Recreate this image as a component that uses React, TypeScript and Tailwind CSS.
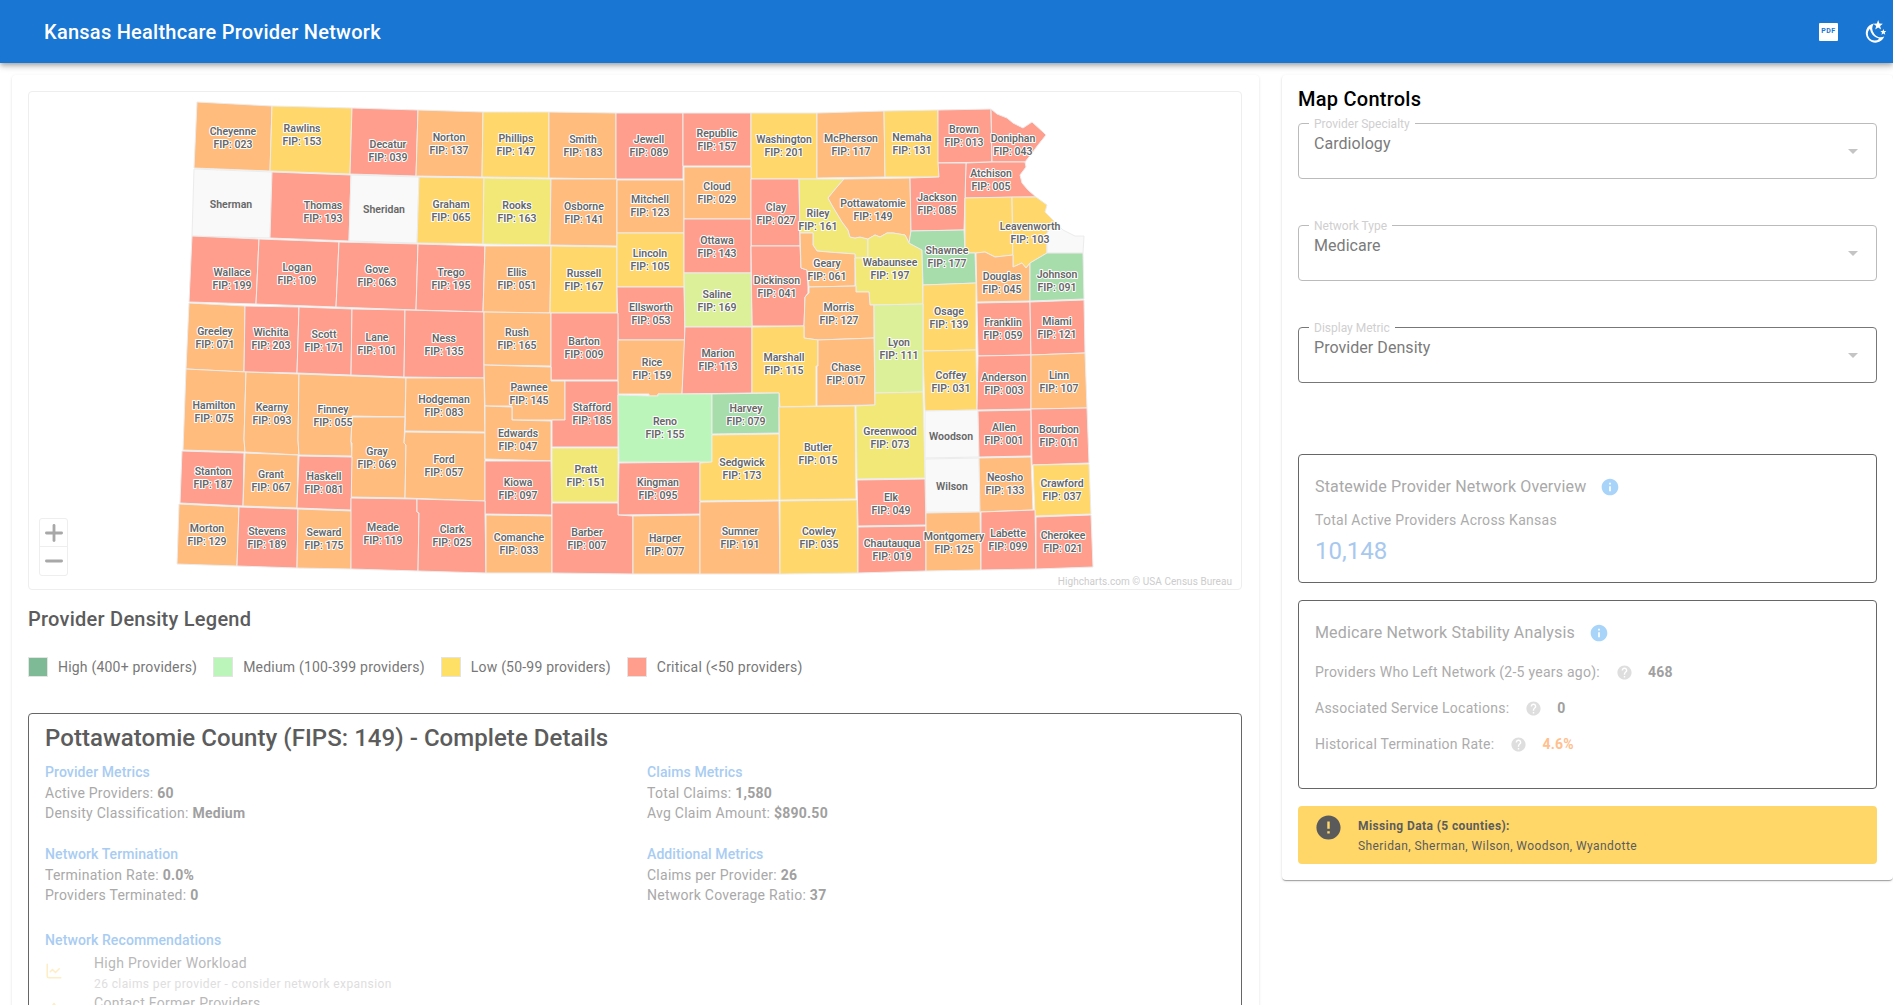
import React from "react";
import { MdInfo, MdHelp, MdError, MdArrowDropDown } from "react-icons/md";
import { Plus, Minus, ChartLine, Star } from "lucide-react";

const O = "#ffbc7d", Y = "#ffd76b", R = "#ff9e8c", M = "#f9f9f9", A = "#f2e877", L = "#dcef99", G = "#a7dcab", V = "#bcf5b9";

type C = [string, string, string, number, number, string];

const counties: C[] = [
  ["Cheyenne", "023", O, 233, 131, "197,102 272,106 270,171 194,168"],
  ["Rawlins", "153", Y, 302, 128, "272,106 352,108 350,174 270,171"],
  ["Decatur", "039", R, 388, 144, "352,108 418,110 416,176 350,174"],
  ["Norton", "137", O, 449, 137, "418,110 483,112 482,177 416,176"],
  ["Phillips", "147", Y, 516, 138, "483,112 549,112 549,178 482,177"],
  ["Smith", "183", O, 583, 139, "549,112 616,113 616,179 549,178"],
  ["Jewell", "089", R, 649, 139, "616,113 683,113 683,179 616,179"],
  ["Republic", "157", R, 717, 133, "683,113 751,113 751,166 683,166"],
  ["Washington", "201", Y, 784, 139, "751,113 817,113 817,179 751,179"],
  ["McPherson", "117", O, 851, 138, "817,113 884,111 885,177 817,178"],
  ["Nemaha", "131", Y, 912, 137, "884,111 938,110 939,177 885,177"],
  ["Brown", "013", R, 964, 129, "938,110 991,109 992,162 938,163"],
  ["Doniphan", "043", R, 1013, 138, "991,109 997,114 1007,118 1013,123 1023,128 1032,122 1043,132 1046,135 1038,145 1032,153 1025,162 992,162"],
  ["Atchison", "005", R, 991, 173, "966,163 992,162 1025,162 1026,167 1020,175 1022,183 1028,190 1036,197 965,198"],
  ["Sherman", "", M, 231, 204, "194,169 272,172 270,238 192,236"],
  ["Thomas", "193", R, 323, 205, "272,172 351,175 349,241 270,238"],
  ["Sheridan", "", M, 384, 209, "351,175 419,177 417,243 349,241"],
  ["Graham", "065", Y, 451, 204, "419,177 484,178 483,244 417,243"],
  ["Rooks", "163", A, 517, 205, "484,178 551,179 550,245 483,244"],
  ["Osborne", "141", O, 584, 206, "551,179 617,179 617,246 550,245"],
  ["Mitchell", "123", O, 650, 199, "617,180 684,180 684,233 617,233"],
  ["Cloud", "029", O, 717, 186, "684,167 751,167 751,219 684,219"],
  ["Clay", "027", R, 776, 207, "751,179 799,179 800,246 751,246"],
  ["Riley", "161", A, 818, 213, "799,179 844,179 837,187 828,198 833,207 842,222 848,230 850,237 855,238 860,237 868,239 868,258 855,258 855,254 828,252 817,251 813,245 813,233 800,233"],
  ["Pottawatomie", "149", O, 873, 203, "844,179 910,178 911,231 909,243 905,235 893,233 887,233 880,237 875,235 868,239 860,237 855,238 850,237 848,230 842,222 833,207 828,198 837,187"],
  ["Jackson", "085", R, 937, 197, "910,178 939,177 938,163 966,163 965,198 964,230 911,231"],
  ["", "", Y, 0, 0, "965,198 1012,197 1013,255 995,257 985,252 975,253 965,253"],
  ["Leavenworth", "103", Y, 1030, 226, "1012,197 1036,197 1047,205 1045,212 1055,222 1047,233 1047,253 1030,263 1026,268 1022,263 1013,267"],
  ["", "", M, 0, 0, "1055,222 1063,230 1075,236 1084,236 1083,253 1047,253 1047,233"],
  ["Wallace", "199", R, 232, 272, "192,236 259,239 256,304 189,302"],
  ["Logan", "109", R, 297, 267, "259,239 339,242 336,307 256,304"],
  ["Gove", "063", R, 377, 269, "339,242 418,244 416,310 336,307"],
  ["Trego", "195", R, 451, 272, "418,244 485,246 483,312 416,310"],
  ["Ellis", "051", O, 517, 272, "485,246 551,246 550,313 483,312"],
  ["Russell", "167", Y, 584, 273, "551,246 617,247 617,313 550,313"],
  ["Lincoln", "105", Y, 650, 253, "617,233 684,233 684,287 617,287"],
  ["Ottawa", "143", R, 717, 240, "684,219 751,219 751,273 684,273"],
  ["Dickinson", "041", R, 777, 280, "751,246 800,246 801,268 807,270 808,287 808,293 805,297 804,326 752,326"],
  ["Geary", "061", O, 827, 263, "800,233 813,233 813,245 817,251 828,252 855,254 855,286 809,287 807,270 801,268"],
  ["Wabaunsee", "197", A, 890, 262, "868,239 875,235 880,237 887,233 893,233 905,235 909,243 922,250 923,304 870,305 869,292 856,292 855,258 868,258"],
  ["Shawnee", "177", G, 947, 250, "911,231 964,230 965,253 975,253 976,283 923,285 922,250 909,243"],
  ["Douglas", "045", O, 1002, 276, "976,253 985,252 995,257 1013,255 1013,267 1022,263 1026,268 1030,263 1030,301 977,302"],
  ["Johnson", "091", G, 1057, 274, "1047,253 1083,253 1084,299 1030,301 1030,263"],
  ["Ellsworth", "053", R, 651, 307, "617,287 684,287 685,340 618,340"],
  ["Saline", "169", L, 717, 294, "684,273 751,273 752,327 685,327"],
  ["Morris", "127", O, 839, 307, "809,287 856,286 856,292 869,292 870,305 874,305 874,338 818,340 804,338 804,326 805,297 809,293"],
  ["Osage", "139", Y, 949, 311, "923,285 976,283 976,350 923,351"],
  ["Franklin", "059", R, 1003, 322, "977,303 1030,302 1031,355 978,356"],
  ["Miami", "121", R, 1057, 321, "1030,302 1084,300 1085,353 1031,355"],
  ["Greeley", "071", O, 215, 331, "189,303 245,306 244,372 186,369"],
  ["Wichita", "203", R, 271, 332, "245,306 299,307 297,373 244,372"],
  ["Scott", "171", R, 324, 334, "299,307 352,309 351,375 297,373"],
  ["Lane", "101", R, 377, 337, "352,309 405,310 404,377 351,375"],
  ["Ness", "135", R, 444, 338, "405,310 484,312 484,378 404,377"],
  ["Rush", "165", O, 517, 332, "484,312 551,313 551,366 484,365"],
  ["Barton", "009", R, 584, 341, "551,313 618,313 618,380 551,380"],
  ["Rice", "159", O, 652, 362, "618,340 685,340 682,394 658,394 658,396 649,396 649,394 618,394"],
  ["Marion", "113", R, 718, 353, "685,327 752,327 752,393 682,394"],
  ["Marshall", "115", Y, 784, 357, "752,327 804,326 804,338 818,340 818,366 816,366 816,406 780,407 779,393 752,393"],
  ["Chase", "017", O, 846, 367, "818,340 874,338 875,405 817,406 817,366 818,366"],
  ["Lyon", "111", L, 899, 342, "874,305 923,304 923,392 875,393"],
  ["Coffey", "031", Y, 951, 375, "923,351 976,350 977,410 925,411"],
  ["Anderson", "003", R, 1004, 377, "978,356 1031,355 1031,409 977,410"],
  ["Linn", "107", O, 1059, 375, "1031,355 1085,353 1087,408 1031,409"],
  ["Hamilton", "075", O, 214, 405, "186,369 246,372 244,439 245,452 183,450"],
  ["Kearny", "093", O, 272, 407, "246,372 299,374 298,440 299,455 245,452 244,439"],
  ["Finney", "055", O, 333, 409, "299,374 406,378 405,417 352,416 351,442 352,456 299,455 298,440"],
  ["Hodgeman", "083", O, 444, 399, "406,378 484,378 485,432 405,431"],
  ["Pawnee", "145", O, 529, 387, "484,365 551,367 551,381 565,381 565,420 512,420 512,406 485,406"],
  ["Stafford", "185", R, 592, 407, "565,381 618,381 618,447 552,447 552,420 565,420"],
  ["Reno", "155", V, 665, 421, "618,395 649,396 658,396 658,394 712,394 712,462 619,462"],
  ["Harvey", "079", G, 746, 408, "712,394 779,393 779,433 712,434"],
  ["Butler", "015", Y, 818, 447, "779,407 855,406 856,499 780,500"],
  ["Greenwood", "073", A, 890, 431, "856,406 875,405 875,393 923,392 925,478 857,479"],
  ["Woodson", "", M, 951, 436, "925,411 978,410 979,457 925,458"],
  ["Allen", "001", R, 1004, 427, "978,411 1031,410 1031,456 979,457"],
  ["Bourbon", "011", R, 1059, 429, "1031,409 1087,408 1089,463 1032,465"],
  ["Gray", "069", O, 377, 451, "352,417 405,417 404,443 406,445 405,498 351,497 352,443 351,442"],
  ["Ford", "057", O, 444, 459, "405,432 485,433 485,501 405,498 406,445 404,443"],
  ["Edwards", "047", O, 518, 433, "485,406 512,407 512,420 551,421 551,461 485,459"],
  ["Pratt", "151", A, 586, 469, "552,448 618,448 618,502 552,502"],
  ["Stanton", "187", R, 213, 471, "182,451 244,453 243,506 180,503"],
  ["Grant", "067", O, 271, 474, "245,453 298,455 297,508 243,506"],
  ["Haskell", "081", R, 324, 476, "299,456 352,457 351,510 297,508"],
  ["Kiowa", "097", R, 518, 482, "485,461 551,461 552,515 485,514"],
  ["Kingman", "095", R, 658, 482, "619,463 700,462 700,514 618,515"],
  ["Sedgwick", "173", Y, 742, 462, "712,435 779,434 779,500 700,501 700,463 712,462"],
  ["Wilson", "", M, 952, 486, "925,459 979,458 980,512 926,512"],
  ["Neosho", "133", O, 1005, 477, "979,458 1031,457 1033,510 980,512"],
  ["Crawford", "037", Y, 1062, 483, "1033,465 1089,464 1091,514 1035,516"],
  ["Morton", "129", O, 207, 528, "179,504 239,507 237,566 177,564"],
  ["Stevens", "189", R, 267, 531, "239,507 298,509 297,568 237,566"],
  ["Seward", "175", O, 324, 532, "298,509 352,511 351,569 297,568"],
  ["Meade", "119", R, 383, 527, "351,498 417,499 417,512 419,513 418,571 351,569"],
  ["Clark", "025", R, 452, 529, "417,499 485,501 485,514 486,573 418,571 419,513 417,512"],
  ["Comanche", "033", O, 519, 537, "486,515 552,516 552,573 486,573"],
  ["Barber", "007", R, 587, 532, "552,503 618,503 618,515 633,516 633,574 552,573"],
  ["Harper", "077", O, 665, 538, "633,516 700,515 700,574 633,574"],
  ["Sumner", "191", O, 740, 531, "700,502 779,501 780,574 700,574"],
  ["Cowley", "035", Y, 819, 531, "780,501 857,500 858,573 780,574"],
  ["Elk", "049", R, 891, 497, "857,480 925,479 926,525 858,526"],
  ["Chautauqua", "019", R, 892, 543, "858,527 926,526 926,571 858,573"],
  ["Montgomery", "125", O, 954, 536, "926,513 980,512 981,570 926,571"],
  ["Labette", "099", R, 1008, 533, "981,512 1035,510 1036,569 981,570"],
  ["Cherokee", "021", R, 1063, 535, "1036,517 1091,515 1093,567 1036,569"],
];

function KansasMap() {
  return (
    <svg viewBox="29 92 1212 497" className="block w-full h-full">
      {counties.map((c, i) => (
        <polygon key={i} points={c[5]} fill={c[2]} stroke="#ececec" strokeWidth={1} />
      ))}
      {counties.filter((c) => c[0]).map((c) => (
        <text
          key={c[0]}
          x={c[3]}
          textAnchor="middle"
          fontFamily="Roboto, sans-serif"
          fontSize={10.5}
          fontWeight={600}
          fill="#666666"
          stroke={c[1] ? "#ffffff" : "none"}
          strokeWidth={2}
          strokeLinejoin="round"
          paintOrder="stroke"
        >
          <tspan x={c[3]} y={c[4] + 4}>{c[0]}</tspan>
          {c[1] && <tspan x={c[3]} y={c[4] + 17}>{`FIP: ${c[1]}`}</tspan>}
        </text>
      ))}
    </svg>
  );
}

function Field({ label, value, active, className }: { label: string; value: string; active?: boolean; className?: string }) {
  return (
    <div className={`relative h-[56px] rounded border pl-[15px] pt-[10px] ${active ? "border-[#777777]" : "border-[#bbbbbb]"} ${className ?? ""}`}>
      <span className="absolute left-[10px] top-[-7px] bg-white px-[5px] text-[12px] leading-[14px] text-[#cfcfcf]">{label}</span>
      <div className="text-[16px] leading-[20px] tracking-[0.05px] text-[#7b7b7b]">{value}</div>
      <MdArrowDropDown className="absolute right-[11px] top-[15px] text-[#c4c4c4]" size={24} />
    </div>
  );
}

function Legend({ color, label }: { color: string; label: string }) {
  return (
    <div className="flex items-center gap-[10px]">
      <span className="h-[20px] w-[20px] border border-[#e4e4e4]" style={{ backgroundColor: color }} />
      <span className="text-[14px] leading-[20px] text-[#777777] tracking-[0.2px]">{label}</span>
    </div>
  );
}

function Metric({ title, rows, className }: { title: string; rows: [string, string][]; className?: string }) {
  return (
    <div className={className}>
      <div className="mb-[1px] text-[14px] leading-[20px] font-medium tracking-[0.1px] text-[#a8ccf2]">{title}</div>
      {rows.map(([k, v]) => (
        <div key={k} className="text-[14px] leading-[20px] tracking-[0.25px] text-[#a9a9a9]">
          {k}: <b className="font-bold text-[#a0a0a0]">{v}</b>
        </div>
      ))}
    </div>
  );
}

function Stat({ label, value, valueClass }: { label: string; value: string; valueClass: string }) {
  return (
    <div className="flex items-center text-[14px] leading-[20px] tracking-[0.25px]">
      <span className="text-[#acacac]">{label}</span>
      <MdHelp size={17} className="ml-[16px] text-[#dedede]" />
      <span className={`ml-[15px] font-bold ${valueClass}`}>{value}</span>
    </div>
  );
}

export default function App() {
  return (
    <div className="flex h-[1005px] w-[1893px] flex-col overflow-hidden bg-white font-['Roboto',sans-serif]">
      <header className="relative z-10 flex h-[63px] shrink-0 items-center bg-[#1976d2] pl-[44px] shadow-[0_2px_4px_-1px_rgba(0,0,0,0.2),0_4px_5px_0_rgba(0,0,0,0.14),0_1px_10px_0_rgba(0,0,0,0.12)]">
        <h1 className="text-[20px] leading-[32px] font-medium tracking-[0.25px] text-white">Kansas Healthcare Provider Network</h1>
        <div className="ml-auto mr-[6px] flex items-center gap-[24px]">
          <div className="flex h-[18px] w-[19px] items-center justify-center rounded-[1px] bg-white text-[7px] font-bold leading-none tracking-[0.5px] text-[#1976d2]">PDF</div>
          <svg viewBox="0 0 24 24" className="h-[25px] w-[25px]" fill="#ffffff">
            <path d="M11.4 4.4 A9.2 9.2 0 1 0 21.4 16.9 A8.4 8.4 0 0 1 11.4 4.4 Z M7.6 9.4 A11.5 11.5 0 0 0 16.6 18.9 A6.2 6.2 0 0 1 7.6 9.4 Z" fillRule="evenodd" />
            <polygon points="15.5,1 16.7,4.2 20,4.5 17.4,6.6 18.3,10 15.5,8.2 12.7,10 13.6,6.6 11,4.5 14.3,4.2" />
            <polygon points="20.5,9.5 21.3,11.4 23.3,11.6 21.8,12.9 22.3,15 20.5,13.9 18.7,15 19.2,12.9 17.7,11.6 19.7,11.4" />
          </svg>
        </div>
      </header>

      <main className="flex flex-1 items-start bg-white pl-[12px] pt-[12px]">
        <section className="h-[1000px] w-[1247px] shrink-0 rounded bg-white p-[16px] shadow-[0_1px_3px_0_rgba(0,0,0,0.12)]">
          <div className="relative h-[499px] w-[1214px] rounded border border-[#eeeeee]">
            <KansasMap />
            <div className="absolute bottom-[13px] left-[10px] w-[29px] rounded-[3px] border border-[#eeeeee] bg-white">
              <div className="flex h-[28px] items-center justify-center border-b border-[#eeeeee]">
                <Plus size={26} strokeWidth={2.6} className="text-[#a8a8a8]" />
              </div>
              <div className="flex h-[28px] items-center justify-center">
                <Minus size={26} strokeWidth={2.6} className="text-[#a8a8a8]" />
              </div>
            </div>
            <span className="absolute bottom-[0px] right-[9px] text-[10px] leading-[14px] tracking-[0.05px] text-[#cccccc]">Highcharts.com © USA Census Bureau</span>
          </div>

          <h2 className="mt-[15px] text-[20px] leading-[28px] font-medium tracking-[0.25px] text-[#5c5c5c]">Provider Density Legend</h2>
          <div className="mt-[24px] flex gap-[16px]">
            <Legend color="#7fba96" label="High (400+ providers)" />
            <Legend color="#bcf5b9" label="Medium (100-399 providers)" />
            <Legend color="#ffe066" label="Low (50-99 providers)" />
            <Legend color="#ff9e8c" label="Critical (<50 providers)" />
          </div>

          <div className="mt-[36px] h-[400px] w-[1214px] rounded border border-[#666666] px-[16px] pt-[8px]">
            <h3 className="text-[24px] leading-[32px] font-medium tracking-[0.05px] text-[#5c5c5c]">Pottawatomie County (FIPS: 149) - Complete Details</h3>
            <div className="mt-[8px] grid grid-cols-[602px_1fr]">
              <div>
                <Metric title="Provider Metrics" rows={[["Active Providers", "60"], ["Density Classification", "Medium"]]} />
                <Metric className="mt-[21px]" title="Network Termination" rows={[["Termination Rate", "0.0%"], ["Providers Terminated", "0"]]} />
              </div>
              <div>
                <Metric title="Claims Metrics" rows={[["Total Claims", "1,580"], ["Avg Claim Amount", "$890.50"]]} />
                <Metric className="mt-[21px]" title="Additional Metrics" rows={[["Claims per Provider", "26"], ["Network Coverage Ratio", "37"]]} />
              </div>
            </div>
            <div className="mt-[25px] text-[14px] leading-[20px] font-medium tracking-[0.1px] text-[#a8ccf2]">Network Recommendations</div>
            <div className="mt-[3px] flex">
              <div className="w-[49px] pt-[9px]">
                <ChartLine size={18} className="text-[#ffedc4]" />
              </div>
              <div>
                <div className="text-[14px] leading-[20px] tracking-[0.3px] text-[#b8b8b8]">High Provider Workload</div>
                <div className="mt-[2px] text-[12px] leading-[18px] tracking-[0.4px] text-[#dedede]">26 claims per provider - consider network expansion</div>
              </div>
            </div>
            <div className="flex">
              <div className="w-[49px] pt-[9px]">
                <Star size={18} className="text-[#ffedc4]" />
              </div>
              <div className="text-[14px] leading-[20px] tracking-[0.3px] text-[#b8b8b8]">Contact Former Providers</div>
            </div>
          </div>
        </section>

        <aside className="ml-[23px] w-[611px] shrink-0 rounded bg-white p-[16px] shadow-[0_2px_1px_-1px_rgba(0,0,0,0.2),0_1px_1px_0_rgba(0,0,0,0.14),0_1px_3px_0_rgba(0,0,0,0.12)]">
          <h2 className="text-[20px] leading-[16px] font-medium tracking-[0.25px] text-black">Map Controls</h2>
          <Field className="mt-[16px]" label="Provider Specialty" value="Cardiology" />
          <Field className="mt-[46px]" label="Network Type" value="Medicare" />
          <Field className="mt-[46px]" label="Display Metric" value="Provider Density" active />

          <div className="mt-[71px] h-[129px] rounded border border-[#666666] pl-[16px] pt-[20px]">
            <div className="flex items-center text-[16px] leading-[24px] tracking-[0.15px] text-[#a9a9a9]">
              Statewide Provider Network Overview
              <MdInfo size={20} className="ml-[14px] text-[#a8d4fa]" />
            </div>
            <div className="mt-[11px] text-[14px] leading-[20px] tracking-[0.27px] text-[#acacac]">Total Active Providers Across Kansas</div>
            <div className="mt-[5px] text-[24px] leading-[32px] text-[#a8c8ee]">10,148</div>
          </div>

          <div className="mt-[17px] h-[189px] rounded border border-[#666666] pl-[16px] pt-[20px]">
            <div className="flex items-center text-[16px] leading-[24px] tracking-[0.15px] text-[#a9a9a9]">
              Medicare Network Stability Analysis
              <MdInfo size={20} className="ml-[14px] text-[#a8d4fa]" />
            </div>
            <div className="mt-[17px] flex flex-col gap-[16px]">
              <Stat label="Providers Who Left Network (2-5 years ago):" value="468" valueClass="text-[#a0a0a0]" />
              <Stat label="Associated Service Locations:" value="0" valueClass="text-[#a0a0a0]" />
              <Stat label="Historical Termination Rate:" value="4.6%" valueClass="text-[#ffc08e]" />
            </div>
          </div>

          <div className="mt-[17px] flex h-[58px] rounded bg-[#ffd769] pl-[16px] pt-[7px]">
            <MdError size={29} className="text-[#5a5a5a]" />
            <div className="ml-[15px] pt-[4px]">
              <div className="text-[12px] leading-[18px] font-bold tracking-[0.4px] text-[#5c5c5c]">Missing Data (5 counties):</div>
              <div className="mt-[2px] text-[12px] leading-[18px] tracking-[0.42px] text-[#5c5c5c]">Sheridan, Sherman, Wilson, Woodson, Wyandotte</div>
            </div>
          </div>
        </aside>
      </main>
    </div>
  );
}
